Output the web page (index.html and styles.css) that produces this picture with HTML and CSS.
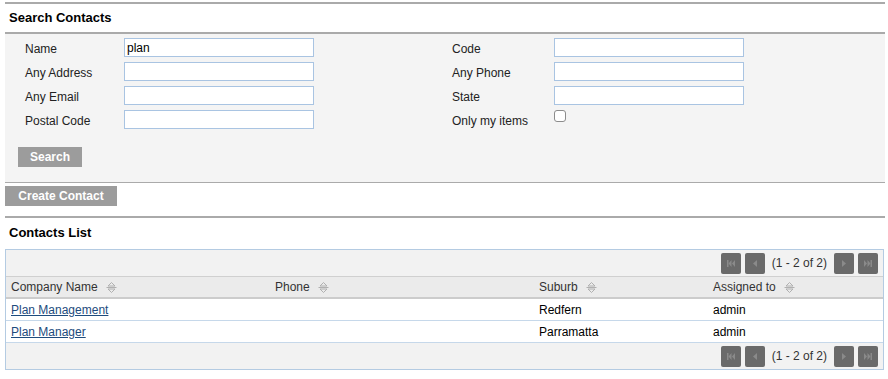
FILE: index.html
```html
<!DOCTYPE html>
<html>
<head>
    <title>Contacts</title>
    <link rel="stylesheet" href="styles.css">
</head>
<body>
    <div class="page">
        <h2 class="section-title">Search Contacts</h2>
        <form class="search-panel">
            <div class="form-grid">
                <div class="form-col">
                    <label>Name</label><input type="text" value="plan">
                    <label>Any Address</label><input type="text">
                    <label>Any Email</label><input type="text">
                    <label>Postal Code</label><input type="text">
                </div>
                <div class="form-col right">
                    <label>Code</label><input type="text">
                    <label>Any Phone</label><input type="text">
                    <label>State</label><input type="text">
                    <label>Only my items</label><span class="check-cell"><span class="checkbox"></span></span>
                </div>
            </div>
            <button type="button" class="btn search-btn">Search</button>
        </form>

        <div class="actions">
            <button type="button" class="btn">Create Contact</button>
        </div>

        <h2 class="section-title list-title">Contacts List</h2>

        <div class="grid-box">
            <div class="pager">
                <span class="pg-btn"><svg width="8" height="7" viewBox="0 0 8 7"><rect x="0" y="0" width="1.5" height="7" fill="#8a8a8a"/><path d="M4.5 0 L1.5 3.5 L4.5 7Z M8 0 L5 3.5 L8 7Z" fill="#8a8a8a"/></svg></span>
                <span class="pg-btn"><svg width="4" height="7" viewBox="0 0 4 7"><path d="M4 0 L0 3.5 L4 7Z" fill="#8a8a8a"/></svg></span>
                <span class="pg-text">(1 - 2 of 2)</span>
                <span class="pg-btn"><svg width="4" height="7" viewBox="0 0 4 7"><path d="M0 0 L4 3.5 L0 7Z" fill="#8a8a8a"/></svg></span>
                <span class="pg-btn"><svg width="8" height="7" viewBox="0 0 8 7"><path d="M0 0 L3 3.5 L0 7Z M3.5 0 L6.5 3.5 L3.5 7Z" fill="#8a8a8a"/><rect x="6.5" y="0" width="1.5" height="7" fill="#8a8a8a"/></svg></span>
            </div>
            <table class="contacts">
                <thead>
                    <tr>
                        <th class="col-name">Company Name <svg class="sort" width="11" height="11" viewBox="0 0 11 11"><path d="M5.5 0.5 L9 4 L2 4Z M2 7 L9 7 L5.5 10.5Z" fill="none" stroke="#b0b0b0"/><line x1="0.5" y1="5.5" x2="10.5" y2="5.5" stroke="#b0b0b0"/></svg></th>
                        <th class="col-phone">Phone <svg class="sort" width="11" height="11" viewBox="0 0 11 11"><path d="M5.5 0.5 L9 4 L2 4Z M2 7 L9 7 L5.5 10.5Z" fill="none" stroke="#b0b0b0"/><line x1="0.5" y1="5.5" x2="10.5" y2="5.5" stroke="#b0b0b0"/></svg></th>
                        <th class="col-suburb">Suburb <svg class="sort" width="11" height="11" viewBox="0 0 11 11"><path d="M5.5 0.5 L9 4 L2 4Z M2 7 L9 7 L5.5 10.5Z" fill="none" stroke="#b0b0b0"/><line x1="0.5" y1="5.5" x2="10.5" y2="5.5" stroke="#b0b0b0"/></svg></th>
                        <th>Assigned to <svg class="sort" width="11" height="11" viewBox="0 0 11 11"><path d="M5.5 0.5 L9 4 L2 4Z M2 7 L9 7 L5.5 10.5Z" fill="none" stroke="#b0b0b0"/><line x1="0.5" y1="5.5" x2="10.5" y2="5.5" stroke="#b0b0b0"/></svg></th>
                    </tr>
                </thead>
                <tbody>
                    <tr>
                        <td><a href="#">Plan Management</a></td>
                        <td></td>
                        <td>Redfern</td>
                        <td>admin</td>
                    </tr>
                    <tr>
                        <td><a href="#">Plan Manager</a></td>
                        <td></td>
                        <td>Parramatta</td>
                        <td>admin</td>
                    </tr>
                </tbody>
            </table>
            <div class="pager bottom">
                <span class="pg-btn"><svg width="8" height="7" viewBox="0 0 8 7"><rect x="0" y="0" width="1.5" height="7" fill="#8a8a8a"/><path d="M4.5 0 L1.5 3.5 L4.5 7Z M8 0 L5 3.5 L8 7Z" fill="#8a8a8a"/></svg></span>
                <span class="pg-btn"><svg width="4" height="7" viewBox="0 0 4 7"><path d="M4 0 L0 3.5 L4 7Z" fill="#8a8a8a"/></svg></span>
                <span class="pg-text">(1 - 2 of 2)</span>
                <span class="pg-btn"><svg width="4" height="7" viewBox="0 0 4 7"><path d="M0 0 L4 3.5 L0 7Z" fill="#8a8a8a"/></svg></span>
                <span class="pg-btn"><svg width="8" height="7" viewBox="0 0 8 7"><path d="M0 0 L3 3.5 L0 7Z M3.5 0 L6.5 3.5 L3.5 7Z" fill="#8a8a8a"/><rect x="6.5" y="0" width="1.5" height="7" fill="#8a8a8a"/></svg></span>
            </div>
        </div>
    </div>
</body>
</html>
```

FILE: styles.css
```css
body {
    margin: 0;
    background-color: #FFFFFF;
    font-family: 'Liberation Sans', Arial, sans-serif;
    font-size: 12px;
    color: #222;
}

.page {
    margin: 2px 3px 0 5px;
}

.section-title {
    margin: 0;
    height: 28px;
    line-height: 27px;
    padding-left: 4px;
    font-size: 13px;
    font-weight: bold;
    color: #000;
    border-top: 2px solid #aaaaaa;
    border-bottom: 2px solid #aaaaaa;
}

.list-title {
    border-bottom: none;
    height: 31px;
    line-height: 30px;
}

/* search form */
.search-panel {
    margin: 0;
    background-color: #f4f4f4;
    padding: 4px 0 15px 13px;
    border-bottom: 1px solid #aaaaaa;
}

.form-grid {
    display: flex;
    padding-left: 7px;
}

.form-col {
    width: 427px;
    display: grid;
    grid-template-columns: 99px 190px;
    row-gap: 5px;
    align-items: center;
}

.form-col.right {
    grid-template-columns: 102px 190px;
}

.form-col label {
    color: #222;
    padding-top: 3px;
}

.form-col input {
    box-sizing: border-box;
    width: 190px;
    height: 19px;
    margin: 0;
    padding: 0 2px;
    border: 1px solid #a9c4e2;
    background: #fff;
    font-family: 'Liberation Sans', Arial, sans-serif;
    font-size: 12px;
    color: #000;
}

.check-cell {
    height: 19px;
}

.checkbox {
    display: block;
    width: 10px;
    height: 10px;
    border: 1px solid #8c8c8c;
    border-radius: 3px;
    background: #fff;
}

.btn {
    height: 20px;
    padding: 0 13px;
    border: none;
    background-color: #9c9c9c;
    color: #fff;
    font-family: 'Liberation Sans', Arial, sans-serif;
    font-size: 12px;
    font-weight: bold;
    cursor: pointer;
}

.search-btn {
    margin-top: 18px;
    width: 64px;
    padding: 0;
}

.actions {
    padding: 3px 0 10px;
}

.actions .btn {
    width: 112px;
    padding: 0;
}

/* contacts grid */
.grid-box {
    margin-right: 1px;
    border: 1px solid #b4cbe2;
}

.pager {
    display: flex;
    align-items: center;
    justify-content: flex-end;
    gap: 4px;
    height: 26px;
    padding-right: 5px;
    background-color: #f2f2f2;
    border-bottom: 1px solid #d0d0d0;
}

.pager.bottom {
    border-bottom: none;
}

.pg-btn {
    display: flex;
    align-items: center;
    justify-content: center;
    width: 20px;
    height: 21px;
    border-radius: 2px;
    background-color: #6a6a6a;
}

.pg-text {
    padding: 0 3px;
    font-size: 12px;
    color: #333;
}

.contacts {
    width: 100%;
    border-collapse: collapse;
    table-layout: fixed;
}

.contacts th {
    height: 20px;
    padding: 0 5px;
    text-align: left;
    font-weight: normal;
    color: #333;
    background-color: #ebebeb;
    border-bottom: 2px solid #cccccc;
}

.col-name,
.col-phone {
    width: 254px;
}

.col-suburb {
    width: 164px;
}

.sort {
    margin-left: 5px;
    vertical-align: -2px;
}

.contacts td {
    height: 21px;
    padding: 0 5px;
    color: #000;
    border-bottom: 1px solid #c6d8ea;
}

.contacts a {
    color: #1d4b7d;
    text-decoration: underline;
}
```
